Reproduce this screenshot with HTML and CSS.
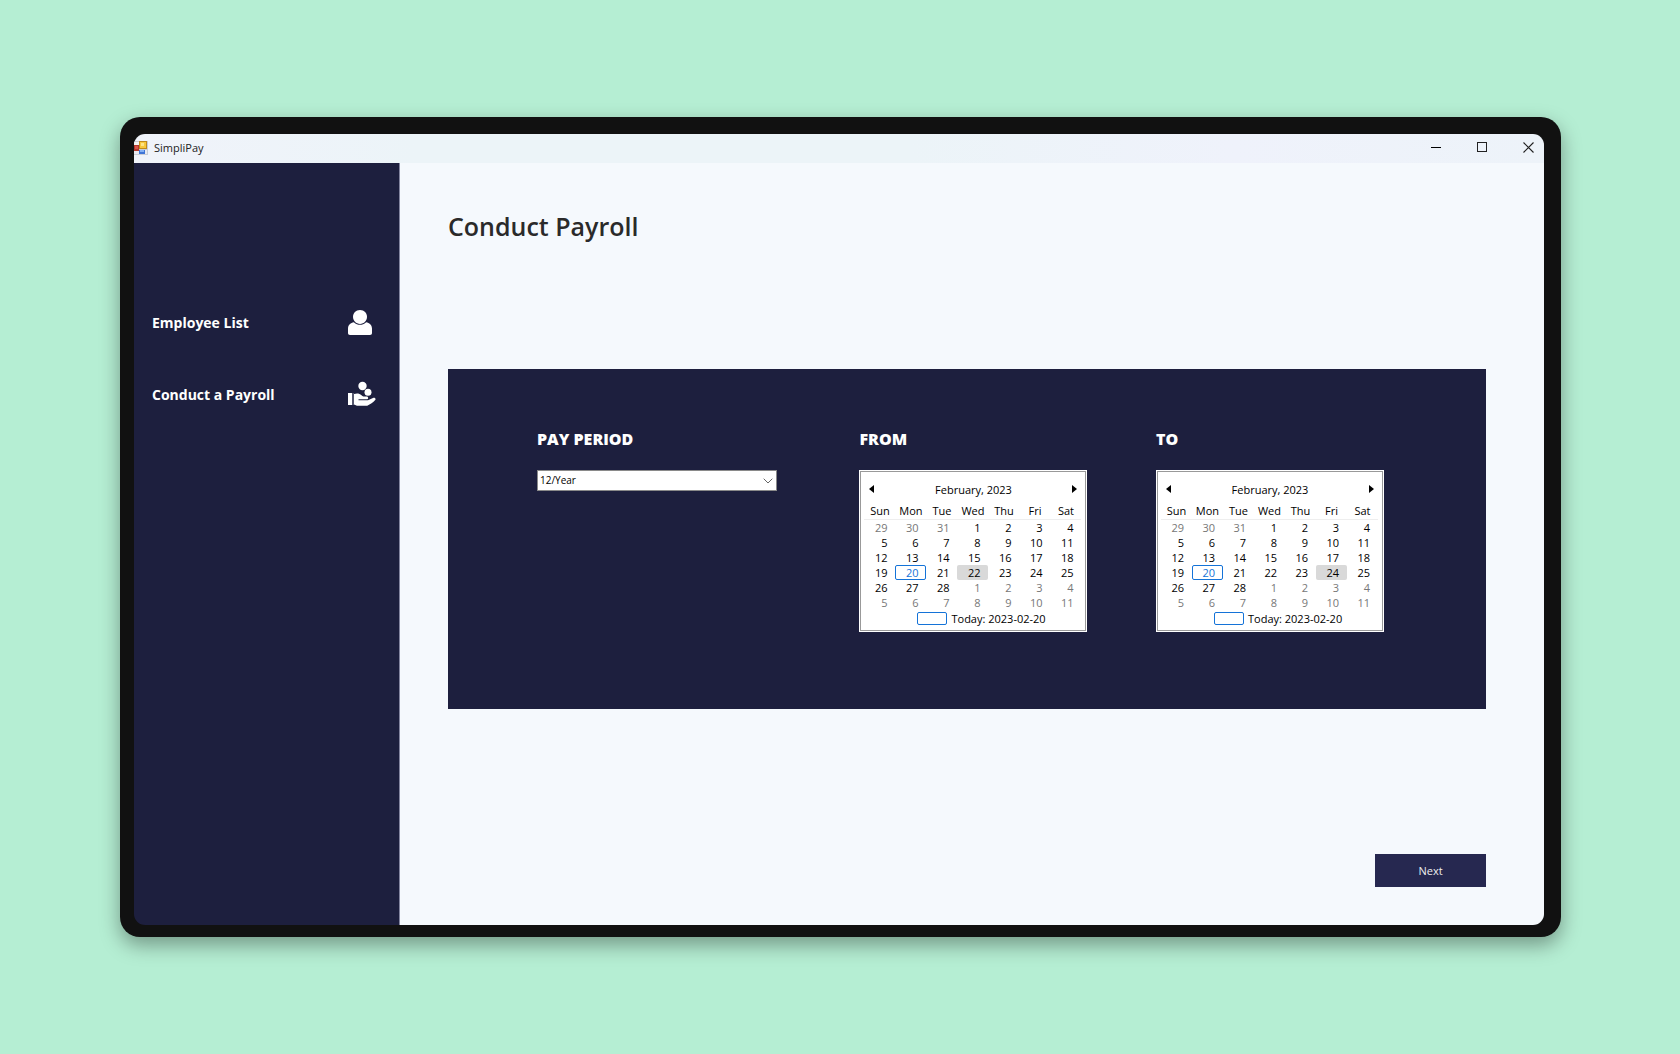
FILE: index.html
```html
<!DOCTYPE html>
<html lang="en">
<head>
<meta charset="utf-8">
<meta name="viewport" content="width=device-width, initial-scale=1">
<title>SimpliPay</title>
<link rel="stylesheet" href="styles.css">
</head>
<body>
<div class="frame">
<div class="window">
  <header class="titlebar">
    <svg class="app-icon" width="14" height="14" viewBox="0 0 14 14" aria-hidden="true">
      <rect width="14" height="14" fill="#c9ccd6"/>
      <rect x="0" y="1" width="5" height="3" fill="#f4f4f4"/>
      <rect x="0" y="4" width="5" height="6" fill="#b3372c"/>
      <rect x="1" y="5" width="3" height="3" fill="#d9534a"/>
      <rect x="0" y="10" width="5" height="3" fill="#e8eaf0"/>
      <rect x="5" y="0" width="8" height="8" fill="#c08a1c"/>
      <rect x="6" y="1" width="6" height="6" fill="#f8c83c"/>
      <rect x="7" y="2" width="3" height="3" fill="#fde488"/>
      <rect x="5" y="9" width="6" height="4" fill="#3f74d6"/>
      <rect x="6" y="9" width="4" height="2" fill="#84b0f4"/>
      <rect x="11" y="9" width="2" height="4" fill="#e8eaf0"/>
    </svg>
    <span class="app-name">SimpliPay</span>
    <div class="window-controls">
      <button type="button" aria-label="Minimize"><svg width="11" height="11" viewBox="0 0 11 11"><path d="M0 5.500H10" stroke="#000"/></svg></button>
      <button type="button" aria-label="Maximize"><svg width="11" height="11" viewBox="0 0 11 11"><rect x=".5" y=".5" width="9" height="9" fill="none" stroke="#222"/></svg></button>
      <button type="button" aria-label="Close"><svg width="11" height="11" viewBox="0 0 11 11"><path d="M.5.5l10 10M10.500.5l-10 10" stroke="#222" stroke-width="1.100"/></svg></button>
    </div>
  </header>
  <div class="body">
    <nav class="sidebar">
      <a href="#employees">Employee List
        <svg width="28" height="28" viewBox="0 0 28 28" aria-hidden="true" fill="#fff">
          <path d="M12 1c4.200 0 7 3 7 6.800S16 15 12 15 5 11.600 5 7.800 7.800 1 12 1z"/>
          <path d="M5.800 13.200C8 15.300 9.800 15.800 12 15.800s4-.5 6.200-2.600c3 .5 5.800 2.600 5.800 6.300V24c0 1.300-.7 2-2 2H2c-1.300 0-2-.7-2-2v-4.500c0-3.700 2.800-5.800 5.800-6.300z"/>
        </svg>
      </a>
      <a href="#payroll">Conduct a Payroll
        <svg width="28" height="28" viewBox="0 0 28 28" aria-hidden="true" fill="#fff">
          <circle cx="14.500" cy="5" r="4.200"/>
          <circle cx="20" cy="11.300" r="3.500"/>
          <path d="M0 12h4v12H0z"/>
          <path d="M4.500 12H5.500v12h-1z" opacity=".5"/>
          <path d="M6 13c3-1 5.500-.6 7.500 1.200.8.800 1.700 1.300 3 1.300h2c2.200 0 2.200 2.800 0 2.800h-8v1h9.500l5-2.300c1.800-.8 3.200.8 2.200 2.100-2 2.300-5 4.300-8 5.700H9l-3-1.300z"/>
        </svg>
      </a>
    </nav>
    <main class="content">
      <h1>Conduct Payroll</h1>
      <form class="panel">
        <div class="field">
          <label class="field-title" for="period">PAY PERIOD</label>
          <div class="combo">
            <select id="period"><option>12/Year</option><option>24/Year</option></select>
            <svg width="10" height="6" viewBox="0 0 10 6" aria-hidden="true"><path d="M.7.7L5 5 9.300.7" fill="none" stroke="#666"/></svg>
          </div>
        </div>
        <section class="field" aria-labelledby="from-title">
          <h2 class="field-title" id="from-title">FROM</h2>
          <div class="calendar">
            <div class="month">
              <button type="button" aria-label="Previous month"><svg width="5" height="8" viewBox="0 0 5 8"><path d="M5 0v8L0 4z"/></svg></button>
              <span>February, 2023</span>
              <button type="button" aria-label="Next month"><svg width="5" height="8" viewBox="0 0 5 8"><path d="M0 0v8l5-4z"/></svg></button>
            </div>
            <table>
              <thead><tr><th>Sun</th><th>Mon</th><th>Tue</th><th>Wed</th><th>Thu</th><th>Fri</th><th>Sat</th></tr></thead>
              <tbody>
                <tr><td class="other"><button type="button">29</button></td><td class="other"><button type="button">30</button></td><td class="other"><button type="button">31</button></td><td><button type="button">1</button></td><td><button type="button">2</button></td><td><button type="button">3</button></td><td><button type="button">4</button></td></tr>
                <tr><td><button type="button">5</button></td><td><button type="button">6</button></td><td><button type="button">7</button></td><td><button type="button">8</button></td><td><button type="button">9</button></td><td><button type="button">10</button></td><td><button type="button">11</button></td></tr>
                <tr><td><button type="button">12</button></td><td><button type="button">13</button></td><td><button type="button">14</button></td><td><button type="button">15</button></td><td><button type="button">16</button></td><td><button type="button">17</button></td><td><button type="button">18</button></td></tr>
                <tr><td><button type="button">19</button></td><td class="today"><button type="button">20</button></td><td><button type="button">21</button></td><td class="selected"><button type="button">22</button></td><td><button type="button">23</button></td><td><button type="button">24</button></td><td><button type="button">25</button></td></tr>
                <tr><td><button type="button">26</button></td><td><button type="button">27</button></td><td><button type="button">28</button></td><td class="other"><button type="button">1</button></td><td class="other"><button type="button">2</button></td><td class="other"><button type="button">3</button></td><td class="other"><button type="button">4</button></td></tr>
                <tr class="other"><td><button type="button">5</button></td><td><button type="button">6</button></td><td><button type="button">7</button></td><td><button type="button">8</button></td><td><button type="button">9</button></td><td><button type="button">10</button></td><td><button type="button">11</button></td></tr>
              </tbody>
            </table>
            <button type="button" class="go-today"><i></i>Today: 2023-02-20</button>
          </div>
        </section>
        <section class="field" aria-labelledby="to-title">
          <h2 class="field-title" id="to-title">TO</h2>
          <div class="calendar">
            <div class="month">
              <button type="button" aria-label="Previous month"><svg width="5" height="8" viewBox="0 0 5 8"><path d="M5 0v8L0 4z"/></svg></button>
              <span>February, 2023</span>
              <button type="button" aria-label="Next month"><svg width="5" height="8" viewBox="0 0 5 8"><path d="M0 0v8l5-4z"/></svg></button>
            </div>
            <table>
              <thead><tr><th>Sun</th><th>Mon</th><th>Tue</th><th>Wed</th><th>Thu</th><th>Fri</th><th>Sat</th></tr></thead>
              <tbody>
                <tr><td class="other"><button type="button">29</button></td><td class="other"><button type="button">30</button></td><td class="other"><button type="button">31</button></td><td><button type="button">1</button></td><td><button type="button">2</button></td><td><button type="button">3</button></td><td><button type="button">4</button></td></tr>
                <tr><td><button type="button">5</button></td><td><button type="button">6</button></td><td><button type="button">7</button></td><td><button type="button">8</button></td><td><button type="button">9</button></td><td><button type="button">10</button></td><td><button type="button">11</button></td></tr>
                <tr><td><button type="button">12</button></td><td><button type="button">13</button></td><td><button type="button">14</button></td><td><button type="button">15</button></td><td><button type="button">16</button></td><td><button type="button">17</button></td><td><button type="button">18</button></td></tr>
                <tr><td><button type="button">19</button></td><td class="today"><button type="button">20</button></td><td><button type="button">21</button></td><td><button type="button">22</button></td><td><button type="button">23</button></td><td class="selected"><button type="button">24</button></td><td><button type="button">25</button></td></tr>
                <tr><td><button type="button">26</button></td><td><button type="button">27</button></td><td><button type="button">28</button></td><td class="other"><button type="button">1</button></td><td class="other"><button type="button">2</button></td><td class="other"><button type="button">3</button></td><td class="other"><button type="button">4</button></td></tr>
                <tr class="other"><td><button type="button">5</button></td><td><button type="button">6</button></td><td><button type="button">7</button></td><td><button type="button">8</button></td><td><button type="button">9</button></td><td><button type="button">10</button></td><td><button type="button">11</button></td></tr>
              </tbody>
            </table>
            <button type="button" class="go-today"><i></i>Today: 2023-02-20</button>
          </div>
        </section>
      </form>
      <button type="button" class="next">Next</button>
    </main>
  </div>
</div>
</div>
</body>
</html>
```
FILE: styles.css
```css
* { box-sizing: border-box; }

body {
  margin: 0;
  min-height: 100vh;
  display: flex;
  padding: 117px 119px 117px 120px;
  background: #b5eed3;
  font-family: "Open Sans", "Noto Sans", sans-serif;
  font-size: 11px;
  color: #000;
}

button {
  margin: 0;
  padding: 0;
  border: 0;
  background: none;
  color: inherit;
  font: inherit;
  cursor: pointer;
}

.frame {
  flex: 1;
  display: flex;
  padding: 17px 17px 12px 14px;
  border-radius: 20px;
  background: #111;
  box-shadow: 0 8px 20px rgba(0, 0, 0, 0.36);
}

.window {
  flex: 1;
  display: flex;
  flex-direction: column;
  border-radius: 11px;
  overflow: hidden;
}

/* Title bar */
.titlebar {
  display: flex;
  align-items: center;
  height: 29px;
  padding: 0 10px 2px 0;
  background: linear-gradient(90deg, #f0f3fa, #ecf4f8 20%, #ecf4f8 55%, #eff2fb 78%, #edf3f9);
}

.app-name { margin-left: 6px; color: #222; }

.window-controls {
  display: flex;
  gap: 35px;
  margin-left: auto;
}

.window-controls svg,
.month svg { display: block; }

/* Navigation */
.body { flex: 1; display: flex; }

.sidebar {
  width: 266px;
  padding: 142px 23px 0 18px;
  border-right: 1px solid #8385a0;
  background: #1d1f3e;
}

.sidebar a {
  display: flex;
  justify-content: space-between;
  align-items: center;
  height: 36px;
  margin-bottom: 36px;
  color: #fff;
  font-size: 14px;
  line-height: 18px;
  font-weight: 700;
  text-decoration: none;
}

/* Content */
.content {
  flex: 1;
  display: flex;
  flex-direction: column;
  padding: 43px 58px 38px 48px;
  background: #f5f9fd;
}

h1 {
  margin: 0 0 123px;
  font-size: 25px;
  line-height: 40px;
  font-weight: 600;
  color: #2a2a2a;
}

.panel {
  display: grid;
  grid-template-columns: 323fr 297fr 227fr;
  min-height: 340px;
  padding: 60px 102px 77px 89px;
  background: #1d1f3e;
}

.field-title {
  display: block;
  margin: 0 0 21px;
  color: #fff;
  font-size: 16px;
  line-height: 20px;
  font-weight: 800;
}

.combo {
  position: relative;
  width: 240px;
}

.combo select {
  display: block;
  width: 100%;
  height: 21px;
  padding: 0 2px 1px;
  border: 1px solid #8a8a8a;
  border-radius: 0;
  background: #fff;
  color: #000;
  font: inherit;
  font-size: 10px;
  appearance: none;
}

.combo svg {
  position: absolute;
  right: 4px;
  top: 8px;
  pointer-events: none;
}

/* Calendar */
.calendar {
  width: 228px;
  height: 162px;
  padding: 8px 4px 0;
  border: 1px solid #fff;
  outline: 1px solid #999;
  outline-offset: -2px;
  background: #fff;
}

.month {
  display: flex;
  justify-content: space-between;
  align-items: center;
  height: 20px;
  padding: 0 5px;
}

.calendar table {
  width: 217px;
  table-layout: fixed;
  border-collapse: separate;
  border-spacing: 0;
}

.calendar th {
  height: 21px;
  padding: 4px 0 0;
  border-bottom: 1px solid #eee;
  font-weight: 400;
  line-height: 16px;
}

.calendar td { height: 15px; padding: 0; }

.calendar td button {
  display: block;
  width: 100%;
  height: 15px;
  padding-right: 8px;
  line-height: 15px;
  text-align: right;
}

.calendar .other { color: #777; }

.calendar .today button {
  padding-right: 7px;
  border: 1px solid #1473d8;
  border-radius: 2px;
  color: #1473d8;
  line-height: 13px;
}

.calendar .selected button {
  border-radius: 2px;
  background: #d9d9d9;
}

.go-today {
  display: flex;
  align-items: center;
  gap: 4px;
  height: 16px;
  margin-left: 53px;
}

.go-today i {
  width: 30px;
  height: 13px;
  border: 1px solid #1473d8;
  border-radius: 2px;
}

.next {
  align-self: flex-end;
  width: 111px;
  height: 33px;
  margin-top: auto;
  background: #262850;
  color: #eee;
}
```
